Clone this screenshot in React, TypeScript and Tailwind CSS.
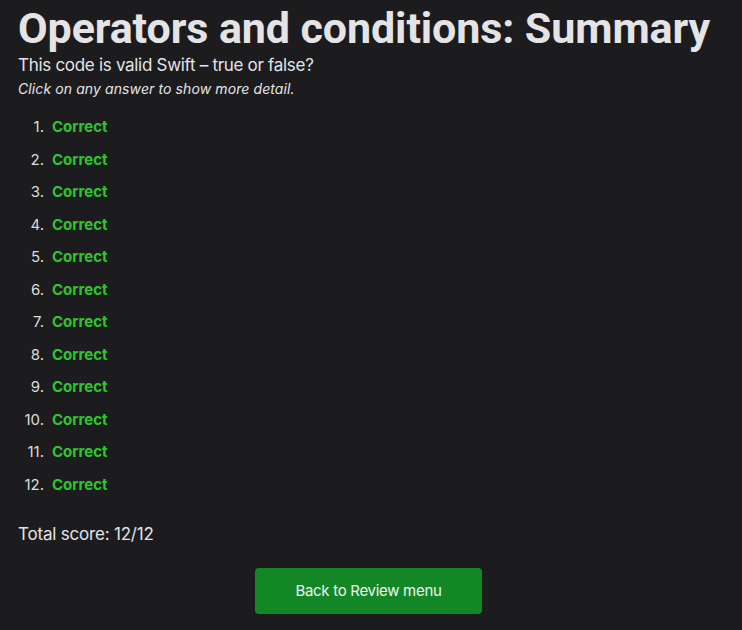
export default function App() {
  const items = Array.from({ length: 12 }, (_, i) => i + 1);

  return (
    <div className="min-h-[630px] w-full bg-[#1c1c1e] pl-[18px] pr-[23px] pt-[4px] pb-6 font-['Inter','Noto_Sans',sans-serif] text-[#e4e4e6]">
      <h1 className="font-['Roboto',sans-serif] text-[43px] font-bold leading-[48px] tracking-[-0.1px] whitespace-nowrap">
        Operators and conditions: Summary
      </h1>
      <p className="text-[17px] leading-[24px] tracking-[-0.3px] mt-[1px]">
        This code is valid Swift – true or false?
      </p>
      <p className="text-[14px] leading-[20px] italic tracking-[0.1px] mt-[2px]">
        Click on any answer to show more detail.
      </p>

      <ol className="mt-[12px]">
        {items.map((n) => (
          <li key={n} className="flex h-[32.5px] items-center">
            <span className="w-[26px] text-right text-[15px] text-[#dcdcde]">{n}.</span>
            <span className="ml-[8px] text-[15px] font-bold text-[#2cc72c]">Correct</span>
          </li>
        ))}
      </ol>

      <p className="mt-[21px] text-[17px] leading-[24px] tracking-[-0.2px]">Total score: 12/12</p>

      <div className="mt-[22px] flex justify-center">
        <button className="h-[46px] w-[227px] rounded-[4px] bg-[#138626] text-[15px] tracking-[-0.3px] text-[#eef5ee]">
          Back to Review menu
        </button>
      </div>
    </div>
  );
}
